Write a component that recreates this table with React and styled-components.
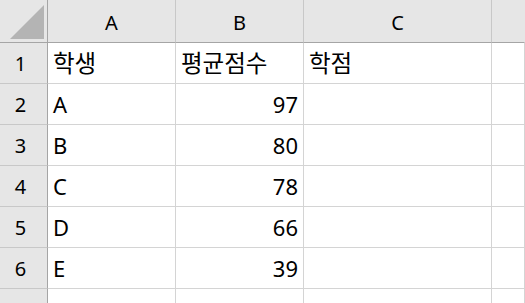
import React from "react";
import styled, { createGlobalStyle } from "styled-components";

const Global = createGlobalStyle`
  html, body { margin: 0; padding: 0; background: #ffffff; }
  body { font-family: "Noto Sans", "Noto Sans CJK KR", sans-serif; overflow: hidden; }
`;

const Sheet = styled.div`
  display: grid;
  grid-template-columns: 48px 128px 128px 188px 33px;
  grid-auto-rows: 41px;
  grid-template-rows: 43px;
  width: 525px;
  height: 303px;
  overflow: hidden;
`;

const Corner = styled.div`
  background: #e6e6e6;
  border-right: 1px solid #a5a5a5;
  border-bottom: 1px solid #a5a5a5;
  display: flex;
  align-items: flex-end;
  justify-content: flex-end;
  padding: 0 3px 3px 0;
`;

const ColHead = styled.div`
  background: #e6e6e6;
  border-right: 1px solid ${(p) => (p.$last ? "transparent" : "#c8c8c8")};
  border-bottom: 1px solid #a5a5a5;
  display: flex;
  align-items: center;
  justify-content: center;
  font-size: 20px;
  color: #000;
  padding-top: 2px;
`;

const RowHead = styled.div`
  background: #e6e6e6;
  border-right: 1px solid #a5a5a5;
  border-bottom: 1px solid #c8c8c8;
  display: flex;
  align-items: center;
  justify-content: center;
  padding-right: 6px;
  font-size: 20px;
  color: #000;
`;

const Cell = styled.div`
  background: #fff;
  border-right: 1px solid #d4d4d4;
  border-bottom: 1px solid #d4d4d4;
  display: flex;
  align-items: center;
  justify-content: ${(p) => (p.$num ? "flex-end" : "flex-start")};
  padding: 0 5px;
  font-size: 22px;
  color: #000;
  white-space: nowrap;
`;

const Hangul = styled.span`
  font-family: "Noto Sans CJK KR", sans-serif;
  font-size: 23.5px;
  line-height: 1;
`;

const cols = ["A", "B", "C", ""];
const rows = [
  ["학생", "평균점수", "학점"],
  ["A", 97, ""],
  ["B", 80, ""],
  ["C", 78, ""],
  ["D", 66, ""],
  ["E", 39, ""],
  ["", "", ""],
];

const isHangul = (v) => typeof v === "string" && /[\uAC00-\uD7A3]/.test(v);

export default function App() {
  return (
    <>
      <Global />
      <Sheet>
        <Corner>
          <svg width="34" height="34" viewBox="0 0 34 34">
            <polygon points="0,34 34,34 34,0" fill="#b4b4b4" />
          </svg>
        </Corner>
        {cols.map((c, i) => (
          <ColHead key={i} $last={i === cols.length - 1}>{c}</ColHead>
        ))}
        {rows.map((r, ri) => (
          <React.Fragment key={ri}>
            <RowHead>{ri + 1}</RowHead>
            {r.map((v, ci) => (
              <Cell key={ci} $num={typeof v === "number"}>
                {isHangul(v) ? <Hangul>{v}</Hangul> : v}
              </Cell>
            ))}
            <Cell />
          </React.Fragment>
        ))}
      </Sheet>
    </>
  );
}
